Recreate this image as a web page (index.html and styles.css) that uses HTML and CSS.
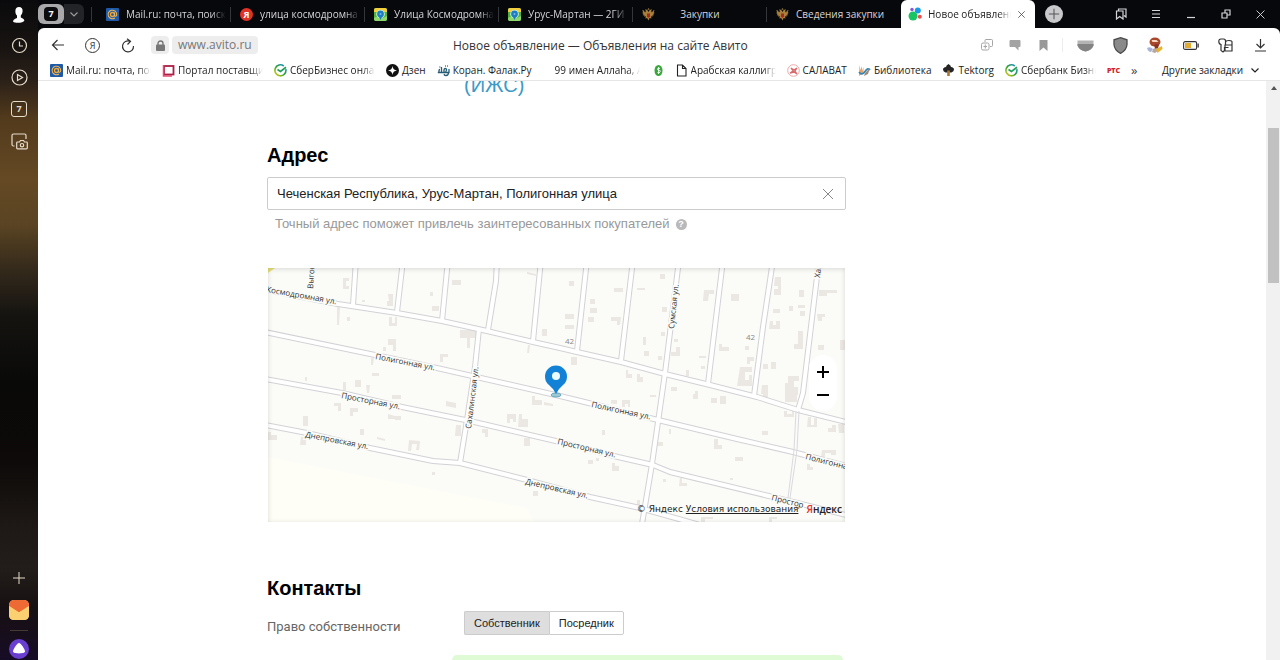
FILE: index.html
```html
<!DOCTYPE html>
<html lang="ru">
<head>
<meta charset="utf-8">
<title>Новое объявление — Объявления на сайте Авито</title>
<link rel="stylesheet" href="styles.css">
</head>
<body>
<svg class="sprite" aria-hidden="true">
  <defs>
    <linearGradient id="sber" x1="0" y1="1" x2="1" y2="0"><stop offset="0" stop-color="#f0d21c"/><stop offset=".5" stop-color="#21a038"/><stop offset="1" stop-color="#2a8be8"/></linearGradient>
    <linearGradient id="envelope" x1="0" y1="0" x2="0" y2="1"><stop offset="0" stop-color="#f8b85a"/><stop offset="1" stop-color="#fbd97a"/></linearGradient>
  </defs>
  <symbol id="i-mailru" viewBox="0 0 13 13"><rect width="13" height="13" rx="1" fill="#1e5aa8"/><circle cx="6.5" cy="6.5" r="2" fill="none" stroke="#f7a62b" stroke-width="1.3"/><path d="M8.5 4.500v2.800c0 1.600 2.200 1.200 2.200-.8a4.300 4.300 0 1 0-1.800 3.500" fill="none" stroke="#e8b45c" stroke-width="1.100"/></symbol>
  <symbol id="i-2gis" viewBox="0 0 13 13"><rect width="13" height="13" rx="2" fill="#4fb33c"/><path d="M0 2q0-2 2-2h9q2 0 2 2v2H0z" fill="#f2cf3a"/><path d="M0 10l4-2 5 2 4-2v3q0 2-2 2H2q-2 0-2-2z" fill="#8fd96b"/><circle cx="6.500" cy="6" r="4.300" fill="#d4efe9"/><circle cx="6.500" cy="6" r="3.400" fill="#1c7cc4"/><path d="M4.500 8h4l-2 4z" fill="#1c7cc4"/><circle cx="6.500" cy="6" r="1" fill="#7db9e0"/></symbol>
  <symbol id="i-eagle" viewBox="0 0 13 13"><path d="M6.500 4C5.500 1.500 4 1 3 1.800L4 3 3 4.500C2 2 .8 2 .2 2.600l1 1.400-1 1 1.400 1-.8 1.300 1.700.1-.2 1.400 1.700-.5-.7 2.300 1.900-.6 1.200 2.600 1.200-2.600 1.900.6-.7-2.300 1.700.5-.2-1.400 1.700-.1-.8-1.300 1.400-1-1-1 1-1.400C12.200 2 11 2 10 4.500L9 3l1-1.200C9 1 7.500 1.500 6.500 4z" fill="#a8803c"/><path d="M5 5.500h3v3L6.500 10 5 8.500z" fill="#a32a20"/><path d="M5.300 1.500L6.500.2l1.200 1.300z" fill="#d8a94e"/></symbol>
  <symbol id="i-sber" viewBox="0 0 13 13"><path d="M11.800 5.200A5.500 5.500 0 1 1 9.800 2" fill="none" stroke="url(#sber)" stroke-width="1.600"/><path d="M3.500 5.500l3 2 5.500-4.200" fill="none" stroke="#21a05a" stroke-width="1.700"/></symbol>
  <symbol id="i-plus" viewBox="0 0 14 14"><path d="M7 1v12M1 7h12"/></symbol>
  <symbol id="i-cross" viewBox="0 0 14 14"><path d="M2 2l10 10M12 2L2 12"/></symbol>
  <symbol id="i-down" viewBox="0 0 10 10"><path d="M1.500 3.500L5 7l3.500-3.500"/></symbol>
</svg>

<div class="browser">
  <nav class="rail" aria-label="Боковая панель">
    <button class="rail-btn rail-avatar" aria-label="Профиль"><svg width="14" height="18" viewBox="0 0 14 18"><path d="M7 1c2.600 0 3.800 1.800 3.600 4.200-.1 2-1 3.300-1.800 4.200v2c1.200.8 3 1 3.600 3C11.600 17 3.200 17.800 1 15.400c.4-2 2.400-2.800 4-3.400V9.600C3.900 8.700 3.300 7 3.400 5 3.400 2.500 4.700 1 7 1z" fill="#fff"/></svg></button>
    <button class="rail-btn" aria-label="История"><svg class="line" width="17" height="17" viewBox="0 0 17 17"><circle cx="8.500" cy="8.500" r="7"/><path d="M8.500 4.500v4.500h3.500"/></svg></button>
    <button class="rail-btn" aria-label="Видео"><svg class="line" width="17" height="17" viewBox="0 0 17 17"><circle cx="8.500" cy="8.500" r="7.500"/><path d="M6.500 5.500v6l5-3z"/></svg></button>
    <button class="rail-btn" aria-label="Вкладки"><span class="rail-count">7</span></button>
    <button class="rail-btn" aria-label="Снимок экрана"><svg class="line" width="17" height="17" viewBox="0 0 17 17"><path d="M3.500 13H2.500Q1 13 1 11.500v-9Q1 1 2.500 1h11Q15 1 15 2.500V6"/><path d="M6.500 9h2l1-1.500h3L13.500 9h2q.8 0 .8.800V15q0 .8-.8.800h-9q-.8 0-.8-.8V9.800q0-.8.8-.8z"/><circle cx="11" cy="12.200" r="1.700"/></svg></button>
    <span class="spacer"></span>
    <button class="rail-btn" aria-label="Добавить"><svg class="line thin" width="14" height="14"><use href="#i-plus"/></svg></button>
    <button class="rail-btn" aria-label="Почта"><svg width="20" height="20" viewBox="0 0 20 20"><rect width="20" height="20" rx="5" fill="url(#envelope)"/><path d="M0 6Q0 0 5 0h10q5 0 5 6l-8.500 5.500q-1.500 1-3 0z" fill="#ee6a35"/><path d="M0 6l8.500 5.500q1.500 1 3 0L20 6v9q0 5-5 5H5q-5 0-5-5z" fill="#fbd070"/></svg></button>
    <hr class="rail-line">
    <button class="rail-btn rail-alice" aria-label="Алиса"><svg width="20" height="20" viewBox="0 0 20 20"><circle cx="10" cy="10" r="10" fill="#6a3fd0"/><path d="M10 4c2 0 6 6.500 6 8.500 0 2.500-12 2.500-12 0C4 10.500 8 4 10 4z" fill="#fff"/></svg></button>
  </nav>

  <div class="frame">
    <header class="tabs">
      <div class="tab-group">
        <button class="tab-count" aria-label="Открытые вкладки"><span>7</span></button>
        <button class="tab-more" aria-label="Список"><svg class="line" width="10" height="10"><use href="#i-down"/></svg></button>
      </div>
      <a class="tab" href="#"><svg width="13" height="13"><use href="#i-mailru"/></svg><span class="fade">Mail.ru: почта, поиск</span></a>
      <a class="tab" href="#"><span class="ya">Я</span><span class="fade">улица космодромна</span></a>
      <a class="tab" href="#"><svg width="13" height="13"><use href="#i-2gis"/></svg><span class="fade">Улица Космодромна</span></a>
      <a class="tab" href="#"><svg width="13" height="13"><use href="#i-2gis"/></svg><span class="fade">Урус-Мартан — 2ГИ</span></a>
      <a class="tab" href="#"><svg width="13" height="13"><use href="#i-eagle"/></svg><span class="mid">Закупки</span></a>
      <a class="tab last" href="#"><svg width="13" height="13"><use href="#i-eagle"/></svg><span>Сведения закупки</span></a>
      <div class="tab active"><svg width="14" height="14" viewBox="0 0 14 14"><circle cx="5" cy="9" r="4.500" fill="#18c562"/><circle cx="9.800" cy="3.500" r="3" fill="#1a9ae8"/><circle cx="4" cy="2.500" r="1.700" fill="#8a55dc"/><circle cx="11.800" cy="9.800" r="2" fill="#f04b4f"/></svg><span class="fade">Новое объявлени</span><button class="tab-close" aria-label="Закрыть вкладку"><svg class="line" width="9" height="9"><use href="#i-cross"/></svg></button></div>
      <button class="tab-new" aria-label="Новая вкладка"><svg class="line" width="12" height="12"><use href="#i-plus"/></svg></button>
      <span class="spacer"></span>
      <div class="cells">
        <button aria-label="Коллекции"><svg class="line" width="12" height="12" viewBox="0 0 12 12"><path d="M3.500 3V1h7.500v8l-2-1.500M1.500 3H8v8L4.700 8.500 1.500 11z"/></svg></button>
        <button aria-label="Меню"><svg class="line" width="10" height="10" viewBox="0 0 10 10"><path d="M1 1.500h8M1 5h8M1 8.500h8"/></svg></button>
        <button aria-label="Свернуть"><svg class="line" width="10" height="10" viewBox="0 0 10 10"><path d="M1 8.500h8"/></svg></button>
        <button aria-label="Развернуть"><svg class="line" width="10" height="10" viewBox="0 0 10 10"><path d="M1 4h5v5H1zM4 4V1h5v5H6"/></svg></button>
        <button aria-label="Закрыть"><svg class="line" width="11" height="11"><use href="#i-cross"/></svg></button>
      </div>
    </header>

    <div class="window">
      <div class="toolbar">
        <button class="tool" aria-label="Назад"><svg class="line" width="14" height="14" viewBox="0 0 14 14"><path d="M13 7H2M6.500 2L1.500 7l5 5"/></svg></button>
        <button class="tool" aria-label="Яндекс"><span class="ya-ring">Я</span></button>
        <button class="tool" aria-label="Обновить"><svg class="line" width="15" height="15" viewBox="0 0 15 15"><path d="M10 3.300A5.500 5.500 0 1 0 13.500 8M7 .8l3.500 2.500L7.500 6.500"/></svg></button>
        <button class="lock" aria-label="Сведения о сайте"><svg width="9" height="11" viewBox="0 0 9 11"><path d="M2 5V3.500a2.500 2.500 0 0 1 5 0V5" fill="none" stroke="#777" stroke-width="1.400"/><rect y="4.500" width="9" height="6.500" rx="1" fill="#777"/></svg></button>
        <a class="url" href="#">www.avito.ru</a>
        <div class="page-title">Новое объявление — Объявления на сайте Авито</div>
        <div class="tools-small">
          <button aria-label="Перевод"><svg width="12" height="12" viewBox="0 0 12 12" fill="none" stroke="#a5a5a5"><path d="M4 3V1.500Q4 .5 5 .5h5.500q1 0 1 1v5q0 1-1 1H9M2 4h4.500Q8 4 8 5.500v4Q8 11 6.500 11H2Q.5 11 .5 9.500v-4Q.5 4 2 4zM4.300 5.500v4M2.500 7.500H6"/></svg></button>
          <button aria-label="Отзывы"><svg width="12" height="12" viewBox="0 0 12 12" fill="#a3a3a3"><path d="M1.500 1h9q1 0 1 1v5q0 1-1 1H9.500v3.500L6 8H1.500q-1 0-1-1V2q0-1 1-1z"/></svg></button>
          <button aria-label="Закладка"><svg width="9" height="11" viewBox="0 0 9 11" fill="#999"><path d="M.5 0h8v11l-4-3.500L.5 11z"/></svg></button>
        </div>
        <div class="cells">
          <button aria-label="Карман"><svg width="17" height="13" viewBox="0 0 17 13"><path d="M.5 1.500h16v5q-2 5-8 6Q2.500 11.500.5 6.500z" fill="#b4b4b4"/><path d="M.5 5h16v1.500q-2 5-8 6Q2.500 11.500.5 6.500z" fill="#838383"/></svg></button>
          <button aria-label="Защита"><svg width="15" height="17" viewBox="0 0 15 17"><path d="M7.500.7L14 2.800v4.700q-.5 6-6.500 8.800Q1.500 13.500 1 7.500V2.800z" fill="#8a8a8a" stroke="#4b4b4b" stroke-width="1.300"/></svg></button>
          <button aria-label="Расширение"><svg width="17" height="17" viewBox="0 0 17 17"><path d="M0 11q3-2 6 1l-2 3q-3 0-4-4z" fill="#a9b5d8"/><path d="M6 12l4-2 2 3-4 3-3-1z" fill="#b7a7a4"/><path d="M9 12l6-3 .5 3-5 4z" fill="#e6b52b"/><ellipse cx="8" cy="5" rx="5.500" ry="4.500" fill="#a8482b"/><path d="M4.500 3h5l2 2h-6z" fill="#f3d6c1"/><path d="M7 8q3-2 5 0l-1 3-3 .5z" fill="#8b3322"/></svg></button>
          <button aria-label="Батарея"><svg width="16" height="9" viewBox="0 0 16 9"><rect x=".6" y=".6" width="13" height="7.800" rx="1.500" fill="#fff" stroke="#333" stroke-width="1.100"/><rect x="2" y="2" width="6" height="5" fill="#e3ab2f"/><path d="M14.500 2.500h1.300v4h-1.300z" fill="#333"/></svg></button>
          <button aria-label="Пароли"><svg class="line" width="15" height="15" viewBox="0 0 15 15"><path d="M7.500 4.500Q8 1 5.500 1H3Q.8 1 .8 3.500T3 6.500v6L5 14l1.500-1.500V9M7.500 7V4.500q0-2 3.500-2t3 2V7M7 7h7v6H7zM7 9.500h3.500"/></svg></button>
          <button aria-label="Загрузки"><svg class="line" width="13" height="14" viewBox="0 0 13 14"><path d="M6.500 1v8.500M2.500 6l4 4 4-4M1 13h11"/></svg></button>
        </div>
      </div>

      <nav class="bookmarks" aria-label="Закладки">
        <a href="#"><svg width="13" height="13"><use href="#i-mailru"/></svg><span class="fade">Mail.ru: почта, пои</span></a>
        <a href="#"><svg width="13" height="13" viewBox="0 0 13 13"><rect x="2" y="2" width="9.500" height="8.500" fill="#fff" stroke="#a91f46" stroke-width="1.800"/><path d="M1.500 1v11H10" fill="none" stroke="#e44b6e" stroke-width="1.500"/></svg><span class="fade">Портал поставщи</span></a>
        <a href="#"><svg width="13" height="13"><use href="#i-sber"/></svg><span class="fade">СберБизнес онлай</span></a>
        <a href="#"><svg width="13" height="13" viewBox="0 0 13 13"><circle cx="6.500" cy="6.500" r="6.500" fill="#111"/><path d="M6.500 2q.4 4.100 4.500 4.500Q6.900 6.900 6.500 11 6.100 6.900 2 6.500 6.100 6.100 6.500 2z" fill="#fff"/></svg><span>Дзен</span></a>
        <a href="#"><svg width="13" height="13" viewBox="0 0 13 13" fill="none" stroke="#245d75" stroke-width="1.300"><path d="M12 5v3.500H4.500V3M7 8.500V6q0-1.500 1.300-1.500T9.500 6 8.300 7.500M4.500 8.500H.8M2 8.500V6.500q0-1 1-1M11.500 8.500q0 3-2.500 3T7.500 10M8 2h.8M10 2h.8M2.500 3h.8"/></svg><span>Коран. Фалак.Ру</span></a>
        <a href="#"><i class="blank"></i><span class="fade">99 имен Аллаhа, А</span></a>
        <a href="#" aria-label="Сайт"><svg width="13" height="13" viewBox="0 0 13 13"><ellipse cx="7.500" cy="6.500" rx="4" ry="5.500" fill="#39a83b"/><path d="M9 4.500q-2.500-1-2.500.5t2 1.500-.5 2.500L6.500 8.500M7.600 3v7" fill="none" stroke="#fff" stroke-width=".9"/></svg></a>
        <a href="#"><svg width="13" height="13" viewBox="0 0 13 13" fill="none" stroke="#222" stroke-width="1.100"><path d="M2.500 1h5L11 4.500V12H2.500zM7.500 1v3.500H11"/></svg><span class="fade">Арабская каллигр</span></a>
        <a href="#"><svg width="13" height="13" viewBox="0 0 13 13" fill="none" stroke="#d56b6b"><circle cx="6.500" cy="6.500" r="5.800" stroke="#e9a9a9"/><path d="M3 9l3-2-2-3 3 2 3-2-2 3 2 3-3-2z" stroke-width="1.300"/></svg><span>САЛАВАТ</span></a>
        <a href="#"><svg width="13" height="13" viewBox="0 0 13 13"><path d="M1.500 1l1 5L4 2v5l1.500-4V9L1 12z" fill="#e5a36b"/><path d="M1 8q3 4 6-.5T12 6" fill="none" stroke="#3387b8" stroke-width="1.700"/><path d="M7 9l5-5-2 6-4 2z" fill="#9b8b7a"/></svg><span>Библиотека</span></a>
        <a href="#"><svg width="13" height="13" viewBox="0 0 13 13"><path d="M6.500 0Q9 1.500 9 3q3 .5 3 2.500T9.500 8.500h-6Q1 7.500 1 5.500T4 3q0-1.500 2.500-3z" fill="#252525"/><path d="M5.200 6.500h2.600V12H5.200z" fill="#a77733"/></svg><span>Tektorg</span></a>
        <a href="#"><svg width="13" height="13"><use href="#i-sber"/></svg><span class="fade short">Сбербанк Бизне</span></a>
        <a href="#" class="rts">РТС</a>
        <a href="#" class="more">»</a>
        <span class="spacer"></span>
        <button class="other">Другие закладки <svg class="line" width="10" height="10"><use href="#i-down"/></svg></button>
      </nav>

      <div class="viewport">
        <main class="page">
          <div class="form">
            <div class="row cut"><span></span><a class="category" href="#">(ИЖС)</a></div>

            <section class="address">
              <h2><label for="address">Адрес</label></h2>
              <div class="field">
                <input id="address" type="text" value="Чеченская Республика, Урус-Мартан, Полигонная улица">
                <button class="clear" aria-label="Очистить"><svg class="line" width="14" height="14"><use href="#i-cross"/></svg></button>
              </div>
              <p class="hint">Точный адрес поможет привлечь заинтересованных покупателей <span class="help">?</span></p>

              <div class="map">
                <svg class="map-canvas" viewBox="268 268 577 254" preserveAspectRatio="xMidYMid slice" role="img" aria-label="Карта">
                  <defs>
                    <g id="roads">
                      <path d="M260 289L338 304 397 313 442 321 487 331 533 342 560 348 577 352 621 362 665 374 710 385 757 397 798 410 850 423"/>
                      <path d="M356 260L353 305M403 260L397 312M448 260L442 321M497 260L496 281 488 330M541 260L533 341M587 260L577 351M633 260L621 361M723 260L708 384M773 260L763 327 754 396"/>
                      <path d="M679 260L665 373 652 464 641 530M819 260L803 393 798 410"/>
                      <path d="M479 329L475 367 467 420 460 463"/>
                      <path d="M260 331L375 355 437 368 560 396 658 420 737 439 793 452 850 467"/>
                      <path d="M260 378L342 393 402 407 470 421 560 442 618 457 653 465 670 472 773 497 850 516"/>
                      <path d="M260 424L307 433 370 448 433 461 460 463 527 480 590 497 640 508 700 525"/>
                    </g>
                  </defs>
                  <path class="land" d="M268 268h577v254H268z"/>
                  <path class="meadow" d="M268 457L527 508 535 522H268z"/>
                  <path fill="#e9e27c" d="M268 268h7l-7 5z"/>
                  <path class="houses" d="M343 278h6v3h-3v5h3v3h-6zM388 294h5v12h-6v-5h2zM452 280h9v5h-9zM432 306h7v5h-7zM430 292h3v4h-3zM337 307h3l-1 18h-2zM347 317h3v4h-3zM389 317h3v6h3v-6h2v9h-8zM460 330h16v8h-6v10h-3v-10h-7zM388 339h8v12h-3v-6h-5zM383 347h3v4h-3zM440 354h8v3h-5v5h-3zM371 358h3l-1 7h-2zM372 373h7v3h-7zM355 380h6v7h-6zM343 382h3v9h-3zM366 385h4l-1 8h-2zM305 377h2v4h-2zM542 329h5v7h-5zM528 345h2l-1 8h-2zM527 272l9 2v2l-9-2zM362 300h3v2h-3z"/>
                  <path class="houses" d="M569 281h5v5h-5zM590 299h5v5h-5zM590 308h7v5h-7zM588 317h6v5h-6zM565 314h9v5h-9zM565 325h9v4h-9zM611 317h10l-1 8h-3v-4h-6zM614 288h9v4h-9zM637 288h8v2h-8zM660 274h5v5h-5zM662 307h5v5h-5zM704 290h10v4h-5l-1 7h-5zM731 294h8v7h-8zM775 277h6v18h-7v-6h4v-3h-4zM773 309h7v4h-7zM770 321h3v4h3v-4h4v8h-11zM799 290h5v7h-5zM789 306h4v5h-4zM798 305h7v3h-7zM800 311h5v5h-5zM819 290h18v3h-10v3h-8zM817 314h8v3h-3v4h-4zM798 331h5v18h-9v-5h4zM818 345h6v5h-6z"/>
                  <path class="houses" d="M643 337h3v8h-3zM661 332h4v4h-4zM674 339h4v3h-4zM671 352h5v-5h4v9h-9zM644 351h5v5h-5zM658 356h4v4h-4zM719 344h3v3h7v4h-10zM745 346h4v4h-4zM747 357h7v4h-4v3h-3zM763 364h5v5h-5zM771 362h5v7h-5zM740 367h12v5h-7v8h4v-5h3v11h-15zM788 376h11v5h-5v6h4v8h-13v-12h3zM762 385h6v9h-7zM571 357h6v8h-6zM626 370h2v4h4v4h-6zM637 374h3v3h3v5h-6zM699 356h7v2h-7zM701 366h4v3h-4zM686 370h3v6h-3zM671 387h6v4h-6zM840 340h5v10h-5z"/>
                  <path class="houses" d="M334 403h7v8h-3v-5h-4zM350 408h8v4h-5v4h-3zM388 414l7 2v3h-7zM395 416h6v4h-6zM392 395h9v4h-9zM446 401l10 2v5l-10-2zM456 425h5v11h-6zM482 429h6v8h-3v-4h-3zM507 414h9v8h-3v-3h-3v4h-3zM519 414h3v5h6v8h-10zM524 438h6v8h-6zM532 396h3v4h7v5h-10zM544 402l9 2v2l-9-1zM360 429h4v6h-4zM377 437l8 2v2l-8-2zM409 440l11 1-1 9h-3l1-6h-5l-1 7h-3zM303 416h5v10h-5zM301 437h5v8h-6zM268 432h3v3h6v5h-9zM432 472h3v3h-3zM533 491h5v5h-5z"/>
                  <path class="houses" d="M611 400h6v4h-6zM622 400h8v7h-2v-3h-3v3h-3zM650 395h6v2h-6zM695 391h3v8h-5v-5h2zM711 398h6v5h-6zM720 396h6v8h-6zM602 430h3v5h-3zM669 429h2v5h-2zM762 431h6v4h-6zM657 442h6v4h-6zM714 439h4v6h4v4h-8zM735 457h8v4h-8zM588 460h5v4h-5zM596 458h3v3h-3zM612 463h3v3h4v5h-7zM680 478h2v5h5v3h-8zM663 479h3v3h-3zM730 478h3v2h-3zM763 391h5v6h-5zM785 391h12v11h-12zM784 411h3v3h5v-3h2v6h-10zM808 417h3v8h3v-7h3v9h-10zM828 428h4v-3h4v7h-8zM838 424h6v9h-5zM822 450h14v5h-5v-2h-6v4h-4zM807 464h3v3h3v3h-6zM701 517h12v2h-8v4h-4zM769 517h8v2h-5v3h-3zM637 500h3v5h-3z"/>
                  <use href="#roads" class="road-edge"/>
                  <use href="#roads" class="road-fill"/>
                  <path class="lane" d="M796 411L794 450 788 498M799 411L797 450 790 498"/>
                  <g class="street">
                    <text transform="translate(266 292) rotate(10)">Космодромная ул.</text>
                    <text transform="translate(375 359) rotate(11)">Полигонная ул.</text>
                    <text transform="translate(341 398) rotate(11)">Просторная ул.</text>
                    <text transform="translate(305 437) rotate(11)">Днепровская ул.</text>
                    <text transform="translate(591 407) rotate(12)">Полигонная ул.</text>
                    <text transform="translate(557 444) rotate(13)">Просторная ул.</text>
                    <text transform="translate(525 484) rotate(13)">Днепровская ул.</text>
                    <text transform="translate(805 459) rotate(14)">Полигонная</text>
                    <text transform="translate(771 500) rotate(14)">Простор</text>
                    <text transform="translate(674 329) rotate(-84)">Сумская ул.</text>
                    <text transform="translate(471 429) rotate(-83)">Сахалинская ул.</text>
                    <text transform="translate(313 289) rotate(-86)">Выгон</text>
                    <text transform="translate(820 278) rotate(-84)">Хан</text>
                  </g>
                  <g class="number"><text x="565" y="344">42</text><text x="746" y="340">42</text></g>
                  <ellipse cx="556" cy="395" rx="5" ry="2" fill="#9cc8d4" stroke="#6aaac0"/>
                  <path d="M556 394q-2-5-7-9a11 11 0 1 1 14 0q-5 4-7 9z" fill="#1382d6"/>
                  <circle cx="556" cy="376" r="4" fill="#eafcff"/>
                </svg>
                <div class="zoom">
                  <button aria-label="Приблизить"><svg width="14" height="14"><use href="#i-plus"/></svg></button>
                  <button aria-label="Отдалить"><svg width="14" height="14" viewBox="0 0 14 14"><path d="M1 7h12"/></svg></button>
                </div>
                <div class="credits"><span>© Яндекс <a href="#">Условия использования</a></span><b><em>Я</em>ндекс</b></div>
              </div>
            </section>

            <section class="contacts">
              <h2>Контакты</h2>
              <div class="row">
                <span class="label" id="owner-label">Право собственности</span>
                <div class="segments" role="group" aria-labelledby="owner-label">
                  <button class="on" aria-pressed="true">Собственник</button><button aria-pressed="false">Посредник</button>
                </div>
              </div>
              <div class="notice"></div>
            </section>
          </div>
        </main>
        <div class="scrollbar"><span class="arrow"></span><span class="thumb"></span></div>
      </div>
    </div>
  </div>
</div>
</body>
</html>
```

FILE: styles.css
```css
* { box-sizing: border-box; }
body { margin: 0; font-family: "Open Sans", "Noto Sans", sans-serif; color: #222; overflow: hidden; }
button { border: 0; padding: 0; margin: 0; background: none; font: inherit; color: inherit; display: flex; align-items: center; justify-content: center; }
a { color: inherit; text-decoration: none; }
svg { flex: none; display: block; }
.sprite { position: absolute; width: 0; height: 0; }
.line { fill: none; stroke: currentColor; stroke-width: 1.2; }
.thin { stroke-width: 1; }
.spacer { flex: 1; }

.browser { display: flex; height: 100vh; background: #07080c; }

/* left rail */
.rail {
  width: 38px; flex: none; display: flex; flex-direction: column; align-items: center; color: #e6dccb; overflow: hidden;
  background: linear-gradient(#0a0a0c 0, #171311 7%, #2a2018 12%, #523a1c 18%, #654924 27%, #5a4423 34%, #33291b 41%, #141310 48%, #090908 58%, #0d0a09 70%, #1e1916 80%, #221d1a 86%, #171012 92%, #170c26 100%);
}
.rail-btn { width: 38px; height: 32px; flex: none; }
.rail-avatar { height: 29px; }
.rail-alice { height: 22px; }
.rail-count { width: 16px; height: 16px; border: 1px solid #e6dccb; border-radius: 3px; font-size: 9px; line-height: 14px; font-weight: 700; }
.rail-line { width: 18px; margin: 4px 0 7px; border: 0; border-top: 1px solid #453b35; }

/* tab strip */
.frame { flex: 1; min-width: 0; display: flex; flex-direction: column; }
.tabs { height: 28px; flex: none; display: flex; align-items: stretch; color: #d5d5d8; font-size: 10px; }
.tab-group { width: 59px; flex: none; display: flex; align-items: center; background: linear-gradient(#35363a, #35363a) 53px 7px / 1px 15px no-repeat; }
.tab-count { width: 26px; height: 20px; border-radius: 6px; background: #a9a9ab; }
.tab-count span { width: 14px; height: 14px; border-radius: 4px; background: #0c0c0e; color: #fff; font-size: 9px; line-height: 14px; font-weight: 700; }
.tab-more { width: 20px; height: 20px; border-radius: 0 6px 6px 0; background: #232427; color: #9a9a9d; }
.tab { width: 134px; display: flex; align-items: center; gap: 7px; padding: 0 5px 0 9px; background: linear-gradient(#35363a, #35363a) right 7px / 1px 15px no-repeat; white-space: nowrap; }
.fade { flex: 1; min-width: 0; overflow: hidden; white-space: nowrap; -webkit-mask-image: linear-gradient(90deg, #000 85%, transparent); mask-image: linear-gradient(90deg, #000 85%, transparent); }
.tab .mid { flex: 1; text-align: center; padding-right: 24px; }
.tab.last { background: none; }
.tab.active { background: #fff; color: #222; border-radius: 6px 6px 0 0; gap: 6px; padding: 0 9px 0 7px; }
.tab-close { color: #444; }
.ya { width: 13px; height: 13px; border-radius: 50%; background: #e03226; color: #fff; font-size: 9px; line-height: 13px; font-weight: 700; text-align: center; }
.tab-new { width: 18px; height: 18px; margin: 5px 0 0 10px; border-radius: 50%; background: #c9c9cc; color: #55555a; }
.cells { display: flex; padding-right: 2px; }
.cells button { width: 35px; }

/* window and toolbar */
.window { flex: 1; min-height: 0; display: flex; flex-direction: column; background: #fff; border-radius: 6px 6px 0 0; overflow: hidden; }
.toolbar { height: 34px; flex: none; display: flex; align-items: center; padding-left: 2px; color: #333; }
.tool { width: 35px; height: 30px; }
.ya-ring { width: 15px; height: 15px; border: 1px solid #333; border-radius: 50%; font-size: 9px; line-height: 13px; }
.lock { width: 18px; height: 18px; margin: 0 3px 0 6px; border-radius: 4px; background: #ededed; }
.url { height: 18px; padding: 0 6px; border-radius: 4px; background: #ededed; color: #777; font-size: 12px; line-height: 18px; }
.page-title { flex: 1; text-align: center; font-size: 12px; white-space: nowrap; }
.tools-small { display: flex; align-items: center; padding: 0 5px 0 30px; border-right: 1px solid #ececec; margin-right: 5px; height: 14px; }
.tools-small button { width: 28px; }

/* bookmarks */
.bookmarks { height: 19px; flex: none; display: flex; align-items: center; gap: 11px; padding: 0 20px 2px 12px; border-bottom: 1px solid #e6e6e6; font-size: 10px; white-space: nowrap; }
.bookmarks a { display: flex; align-items: center; gap: 3px; }
.bookmarks .fade { width: 85px; flex: none; }
.bookmarks .short { width: 75px; }
.blank { width: 9px; }
.bookmarks .rts { color: #d3222a; font-size: 7px; font-weight: 800; }
.bookmarks .more { font-size: 13px; line-height: 14px; color: #444; }
.other { gap: 7px; }

/* page */
.viewport { flex: 1; min-height: 0; display: flex; }
.page { flex: 1; min-width: 0; overflow: hidden; font-family: "Liberation Sans", Arial, sans-serif; }
.form { max-width: 770px; margin: 0 auto; }
.row { display: grid; grid-template-columns: 197px 1fr; align-items: center; }
.cut { height: 18px; overflow: hidden; grid-template-rows: 18px; align-items: end; }
.category { color: #3a9bc7; font-size: 20px; line-height: 28px; }
h2 { margin: 0; font-size: 20px; line-height: 24px; color: #000; }
.address { max-width: 579px; padding-top: 44px; }
.field { display: flex; height: 33px; margin-top: 10px; border: 1px solid #ccc; border-radius: 2px; }
.field input { flex: 1; min-width: 0; border: 0; padding: 0 9px; outline: 0; background: none; font: 13px "Liberation Sans", Arial, sans-serif; color: #222; }
.clear { width: 35px; color: #888; }
.clear svg { stroke-width: 1; }
.hint { display: flex; align-items: center; gap: 6px; margin: 6px 0 0; padding-left: 8px; font-size: 13px; line-height: 16px; color: #999; }
.help { width: 11px; height: 11px; border-radius: 50%; background: #b9b9b9; color: #fff; font-size: 9px; line-height: 11px; font-weight: 700; text-align: center; }

.map { position: relative; height: 254px; margin: 36px 1px 0; overflow: hidden; }
.map::after { content: ""; position: absolute; inset: 0; pointer-events: none; box-shadow: inset 0 1px 5px rgba(0, 0, 0, .15); }
.map-canvas { width: 100%; height: 100%; }
.land { fill: #fbfcf8; }
.meadow { fill: #fffef6; }
.houses { fill: #ebe7e3; }
.road-edge, .road-fill { fill: none; stroke-linejoin: round; }
.road-edge { stroke: #d2d2d6; stroke-width: 6; }
.road-fill { stroke: #fff; stroke-width: 4; }
.lane { fill: none; stroke: #dadade; }
.street { font: 8px "Open Sans", sans-serif; fill: #333; stroke: #fbfcf8; stroke-width: 3; paint-order: stroke; }
.number { font: 8px "Open Sans", sans-serif; fill: #888; }
.zoom { position: absolute; right: 8px; top: 87px; width: 28px; padding: 5px 0; border-radius: 14px; background: #fff; }
.zoom button { width: 28px; height: 23px; }
.zoom svg { stroke: #000; stroke-width: 2; }
.credits { position: absolute; right: 3px; bottom: 6px; display: flex; align-items: center; gap: 8px; font: 9px/14px "DejaVu Sans", sans-serif; color: #222; }
.credits a { text-decoration: underline; }
.credits b { font: 600 10px/14px "Open Sans", sans-serif; }
.credits em { color: #e5352b; font-style: normal; }

.contacts { padding-top: 54px; }
.contacts .row { margin-top: 11px; }
.label { padding-top: 6px; font: 13px Roboto, sans-serif; color: #666; }
.segments { display: flex; }
.segments button { height: 24px; padding: 0 9px; border: 1px solid #ccc; border-radius: 0 2px 2px 0; font-size: 11px; color: #222; background: #fff; }
.segments .on { border-right: 0; border-radius: 2px 0 0 2px; background: #dedede; }
.notice { height: 60px; margin: 20px 194px 0 185px; border-radius: 5px; background: #dffbd5; }

.scrollbar { width: 14px; flex: none; background: #f1f1f1; padding: 5px 1px 0 2px; display: flex; flex-direction: column; align-items: center; gap: 38px; }
.arrow { border: 3px solid transparent; border-top: 0; border-bottom: 4px solid #555; }
.thumb { width: 100%; height: 27%; background: #c1c1c1; }
```
